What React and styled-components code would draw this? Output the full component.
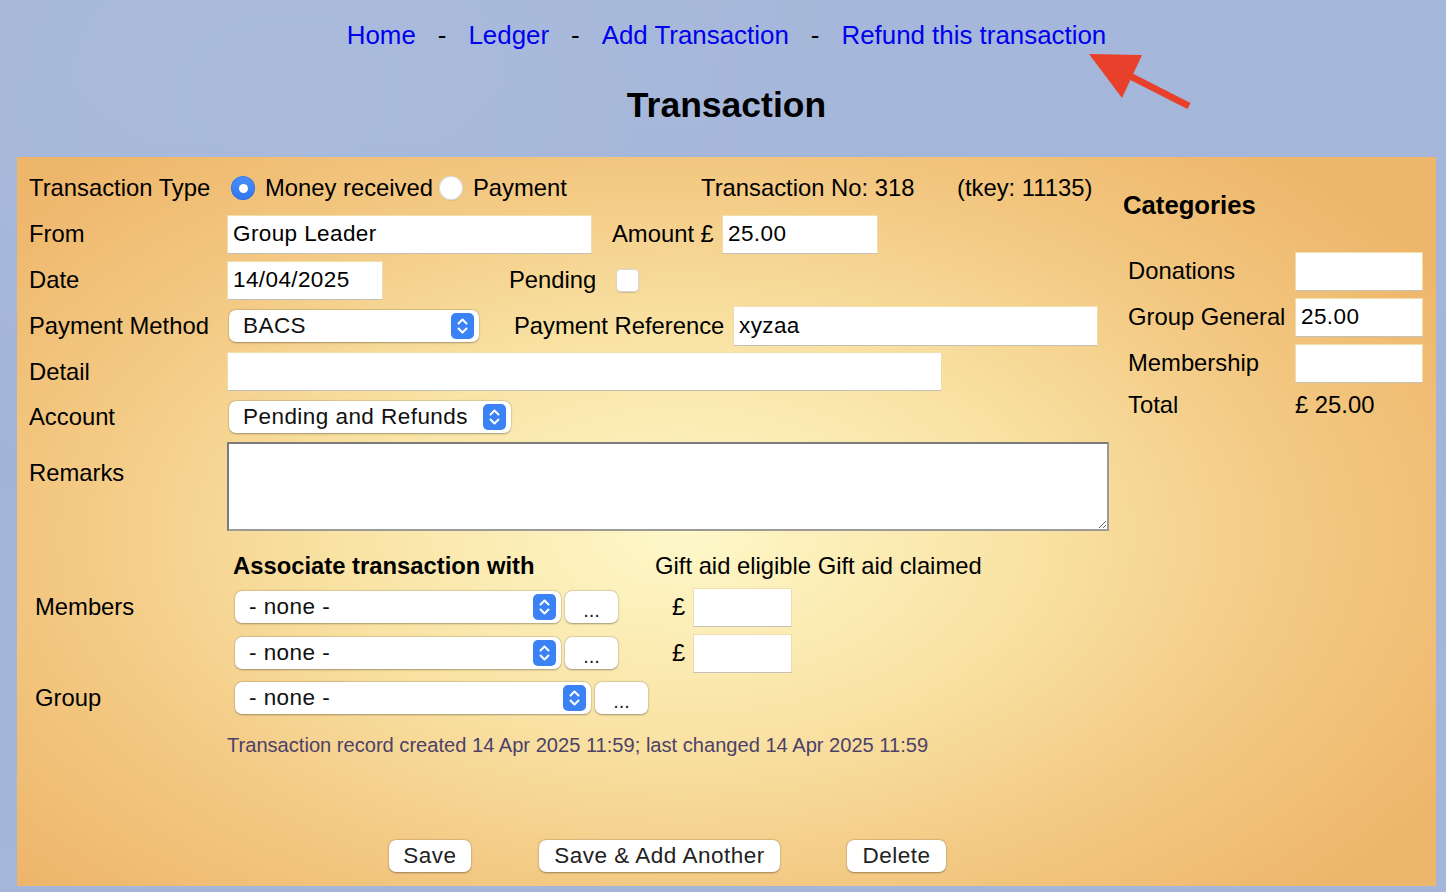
import React from "react";
import styled, { createGlobalStyle } from "styled-components";

const Global = createGlobalStyle`
  html, body { margin: 0; padding: 0; }
  body { font-family: "Liberation Sans", Arial, sans-serif; color: #000; }
  * { box-sizing: border-box; }
`;

const Page = styled.div`
  position: relative;
  width: 1446px;
  height: 892px;
  overflow: hidden;
  padding: 20px 10px 6px 17px;
  background:
    radial-gradient(ellipse at 20% 10%, rgba(255,255,255,0.06), transparent 40%),
    linear-gradient(180deg, #a5b7da 0%, #a2b4d8 50%, #a4b6da 100%);
  display: flex;
  flex-direction: column;
`;

const Nav = styled.nav`
  display: flex;
  justify-content: center;
  align-items: center;
  gap: 22px;
  height: 30px;
  font-size: 25.9px;
  line-height: 30px;
`;

const NavLink = styled.a`
  color: #0000ee;
  text-decoration: none;
`;

const NavSep = styled.span`
  color: #000;
`;

const Title = styled.h1`
  margin: 34px 0 31px;
  text-align: center;
  font-size: 35.5px;
  line-height: 42px;
  font-weight: bold;
`;

const Arrow = styled.svg`
  position: absolute;
  left: 1080px;
  top: 45px;
`;

const Panel = styled.div`
  flex: 1;
  display: flex;
  padding: 8px 12px 14px 12px;
  background: radial-gradient(ellipse 62% 70% at 47% 52%, #fef8c9 0%, #f9e2a3 40%, #f3c983 70%, #eeb66b 100%);
`;

const Main = styled.div`
  width: 1094px;
  flex: none;
  display: flex;
  flex-direction: column;
`;

const Row = styled.div`
  display: flex;
  align-items: ${(p) => (p.$top ? "flex-start" : "center")};
  height: ${(p) => p.$h || 46}px;
  margin-top: ${(p) => p.$mt || 0}px;
  font-size: 23.8px;
`;

const Label = styled.div`
  width: ${(p) => p.$w || 198}px;
  flex: none;
  padding-top: ${(p) => p.$pt || 0}px;
  white-space: nowrap;
`;

const Cell = styled.div`
  display: flex;
  align-items: center;
  width: ${(p) => (p.$w ? `${p.$w}px` : "auto")};
  flex: none;
  white-space: nowrap;
  margin-left: ${(p) => p.$ml || 0}px;
`;

const Radio = styled.span`
  width: 24px;
  height: 24px;
  border-radius: 50%;
  flex: none;
  margin-left: ${(p) => p.$ml || 0}px;
  background: ${(p) => (p.$on ? "linear-gradient(#4a8ff8, #2f77f2)" : "#fff")};
  box-shadow: ${(p) =>
    p.$on ? "inset 0 0 0 1px rgba(30,90,200,0.3)" : "inset 0 0 0 1px #d8d8d8, 0 0.5px 1px rgba(0,0,0,0.15)"};
  display: flex;
  align-items: center;
  justify-content: center;
  &::after {
    content: "";
    display: ${(p) => (p.$on ? "block" : "none")};
    width: 9px;
    height: 9px;
    border-radius: 50%;
    background: #fff;
  }
`;

const RadioText = styled.span`
  margin-left: 10px;
`;

const TextInput = styled.input`
  width: ${(p) => p.$w}px;
  height: ${(p) => p.$h || 39}px;
  flex: none;
  margin: 0 0 0 ${(p) => p.$ml || 0}px;
  padding: 0 5px;
  background: #fff;
  border: 1px solid;
  border-color: #f1dfa9 #efdcaa #c4c0b6 #efdcaa;
  border-radius: 0;
  font-family: "Liberation Sans", Arial, sans-serif;
  font-size: 22.5px;
  letter-spacing: 0.4px;
  color: #000;
  outline: none;
`;

const Checkbox = styled.span`
  width: 23px;
  height: 23px;
  flex: none;
  border-radius: 5px;
  background: #fff;
  box-shadow: inset 0 0 0 1px #d6d6d6, 0 0.5px 1px rgba(0,0,0,0.15);
`;

const SelectBox = styled.div`
  width: ${(p) => p.$w}px;
  height: 32px;
  flex: none;
  margin-left: ${(p) => p.$ml || 0}px;
  display: flex;
  align-items: center;
  justify-content: space-between;
  padding: 0 5px 0 14px;
  background: #fff;
  border-radius: 7px;
  box-shadow: 0 0.5px 2px rgba(0,0,0,0.3), 0 0 0 0.5px rgba(0,0,0,0.08);
  font-size: 22.5px;
  letter-spacing: 0.45px;
  color: #111;
`;

const Stepper = () => (
  <svg width="23" height="26" viewBox="0 0 23 26">
    <rect x="0" y="0" width="23" height="26" rx="5" fill="#3a82f6" />
    <path d="M7.5 10.5 L11.5 6.5 L15.5 10.5" fill="none" stroke="#fff" strokeWidth="2" strokeLinecap="round" strokeLinejoin="round" />
    <path d="M7.5 15.5 L11.5 19.5 L15.5 15.5" fill="none" stroke="#fff" strokeWidth="2" strokeLinecap="round" strokeLinejoin="round" />
  </svg>
);

const Select = ({ w, ml, children }) => (
  <SelectBox $w={w} $ml={ml}>
    <span>{children}</span>
    <Stepper />
  </SelectBox>
);

const Remarks = styled.textarea`
  width: 882px;
  height: 89px;
  margin-top: 3px;
  flex: none;
  border: 2px solid;
  border-color: #7b7b7b #9b9b9b #9b9b9b #7b7b7b;
  background: #fff;
  resize: both;
  font-family: "Liberation Sans", Arial, sans-serif;
  font-size: 20px;
  outline: none;
`;

const Lower = styled.div`
  display: flex;
  flex-direction: column;
  padding-left: 6px;
`;

const BoldHead = styled.span`
  font-weight: bold;
  margin-left: -2px;
`;

const Btn = styled.button`
  height: 32px;
  width: ${(p) => (p.$w ? `${p.$w}px` : "auto")};
  padding: 0;
  flex: none;
  margin-left: ${(p) => p.$ml || 0}px;
  background: #fff;
  border: none;
  border-radius: 7px;
  box-shadow: 0 0.5px 2px rgba(0,0,0,0.35), 0 0 0 0.5px rgba(0,0,0,0.06);
  font-family: "Liberation Sans", Arial, sans-serif;
  font-size: 22.5px;
  letter-spacing: 0.5px;
  color: #222;
`;

const DotsBtn = styled(Btn)`
  width: 53px;
  margin-left: 4px;
  font-size: 20px;
  letter-spacing: 0;
  line-height: 38px;
  display: flex;
  justify-content: center;
  align-items: flex-start;
`;

const Pound = styled.span`
  margin-left: ${(p) => p.$ml || 0}px;
`;

const Stamp = styled.div`
  margin: 15px 0 0 198px;
  font-size: 20.1px;
  line-height: 20px;
  color: #4d4169;
  white-space: nowrap;
`;

const Buttons = styled.div`
  margin-top: auto;
  display: flex;
  padding-left: 360px;
`;

const Side = styled.div`
  flex: 1;
  display: flex;
  flex-direction: column;
`;

const SideHead = styled.h3`
  margin: 25px 0 28px;
  font-size: 25.7px;
  line-height: 30px;
  font-weight: bold;
`;

const CatRow = styled.div`
  display: flex;
  align-items: center;
  height: ${(p) => p.$h || 46}px;
  padding-left: 5px;
  font-size: 23.8px;
`;

const CatLabel = styled.span`
  width: 167px;
  flex: none;
  white-space: nowrap;
`;

export default function App() {
  return (
    <>
      <Global />
      <Page>
        <Nav>
          <NavLink href="#">Home</NavLink>
          <NavSep>-</NavSep>
          <NavLink href="#">Ledger</NavLink>
          <NavSep>-</NavSep>
          <NavLink href="#">Add Transaction</NavLink>
          <NavSep>-</NavSep>
          <NavLink href="#">Refund this transaction</NavLink>
        </Nav>
        <Arrow width="120" height="70" viewBox="0 0 120 70">
          <line x1="48" y1="30" x2="109" y2="61" stroke="#e8412b" strokeWidth="7" />
          <polygon points="9,9 62,10 42,53" fill="#e8412b" />
        </Arrow>
        <Title>Transaction</Title>
        <Panel>
          <Main>
            <Row>
              <Label>Transaction Type</Label>
              <Cell $w={474}>
                <Radio $on $ml={4} />
                <RadioText>Money received</RadioText>
                <Radio $ml={6} />
                <RadioText>Payment</RadioText>
              </Cell>
              <Cell $w={256}>Transaction No: 318</Cell>
              <Cell>(tkey: 11135)</Cell>
            </Row>
            <Row>
              <Label>From</Label>
              <TextInput $w={365} defaultValue="Group Leader" />
              <Cell $w={110} $ml={20}>Amount £</Cell>
              <TextInput $w={156} defaultValue="25.00" />
            </Row>
            <Row>
              <Label>Date</Label>
              <TextInput $w={156} defaultValue="14/04/2025" />
              <Cell $w={107} $ml={126}>Pending</Cell>
              <Checkbox />
            </Row>
            <Row>
              <Label>Payment Method</Label>
              <Select w={250} ml={2}>BACS</Select>
              <Cell $w={219} $ml={35}>Payment Reference</Cell>
              <TextInput $w={365} $h={40} defaultValue="xyzaa" />
            </Row>
            <Row $h={45}>
              <Label>Detail</Label>
              <TextInput $w={715} defaultValue="" />
            </Row>
            <Row $h={45}>
              <Label>Account</Label>
              <Select w={282} ml={2}>Pending and Refunds</Select>
            </Row>
            <Row $top $h={95}>
              <Label $pt={20}>Remarks</Label>
              <Remarks />
            </Row>
            <Lower>
              <Row $h={36} $mt={14}>
                <Label $w={200} />
                <Cell $w={420}>
                  <BoldHead>Associate transaction with</BoldHead>
                </Cell>
                <Cell>Gift aid eligible Gift aid claimed</Cell>
              </Row>
              <Row>
                <Label $w={200}>Members</Label>
                <Select w={326}>- none -</Select>
                <DotsBtn>...</DotsBtn>
                <Pound $ml={54}>£</Pound>
                <TextInput $w={99} $ml={8} defaultValue="" />
              </Row>
              <Row>
                <Label $w={200} />
                <Select w={326}>- none -</Select>
                <DotsBtn>...</DotsBtn>
                <Pound $ml={54}>£</Pound>
                <TextInput $w={99} $ml={8} defaultValue="" />
              </Row>
              <Row $h={44}>
                <Label $w={200}>Group</Label>
                <Select w={356}>- none -</Select>
                <DotsBtn>...</DotsBtn>
              </Row>
            </Lower>
            <Stamp>Transaction record created 14 Apr 2025 11:59; last changed 14 Apr 2025 11:59</Stamp>
            <Buttons>
              <Btn $w={82}>Save</Btn>
              <Btn $w={241} $ml={68}>Save &amp; Add Another</Btn>
              <Btn $w={99} $ml={67}>Delete</Btn>
            </Buttons>
          </Main>
          <Side>
            <SideHead>Categories</SideHead>
            <CatRow>
              <CatLabel>Donations</CatLabel>
              <TextInput $w={128} defaultValue="" />
            </CatRow>
            <CatRow>
              <CatLabel>Group General</CatLabel>
              <TextInput $w={128} defaultValue="25.00" />
            </CatRow>
            <CatRow>
              <CatLabel>Membership</CatLabel>
              <TextInput $w={128} defaultValue="" />
            </CatRow>
            <CatRow $h={38}>
              <CatLabel>Total</CatLabel>
              <span>£ 25.00</span>
            </CatRow>
          </Side>
        </Panel>
      </Page>
    </>
  );
}
